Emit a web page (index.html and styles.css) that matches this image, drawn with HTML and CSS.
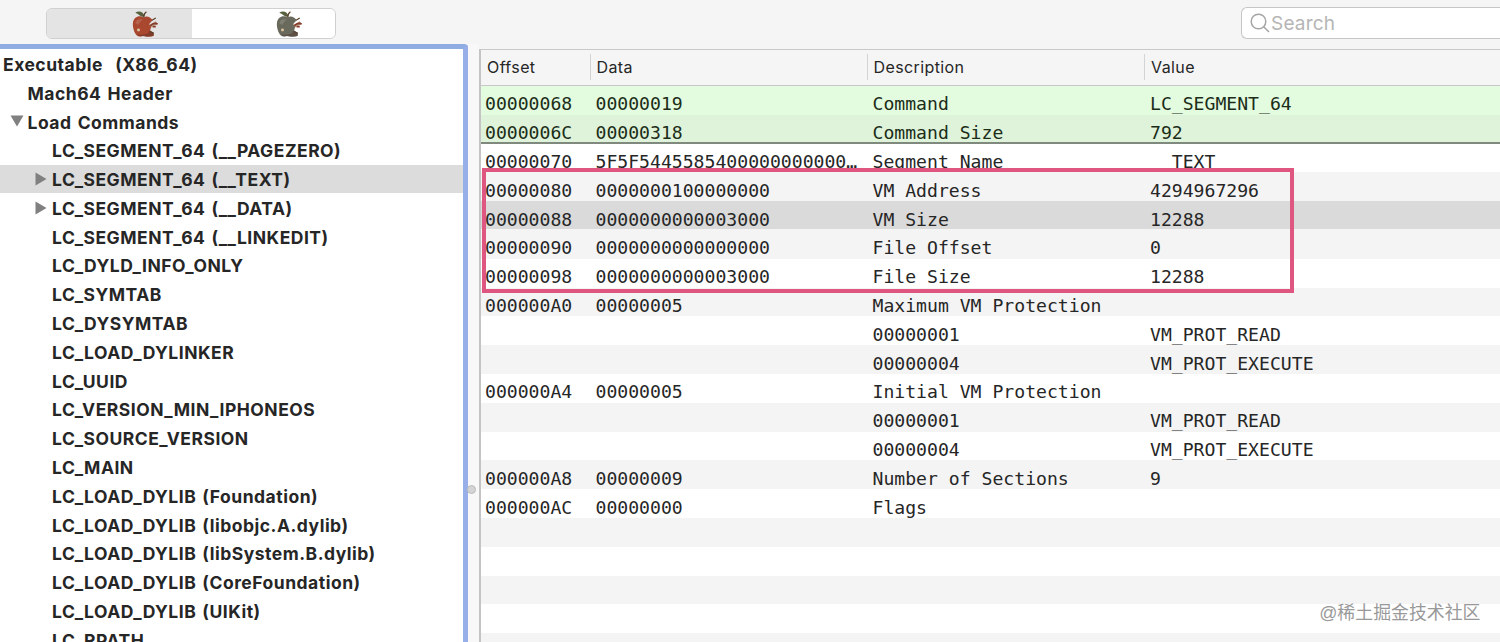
FILE: index.html
```
<!DOCTYPE html>
<html lang="en">

<head>
    <meta charset="UTF-8">
    <meta name="viewport" content="width=device-width, initial-scale=1.0">
    <title>Executable (X86_64)</title>
    <link rel="stylesheet" href="styles.css">
</head>

<body>
    <svg class="defs" width="0" height="0">
        <symbol id="apple" viewBox="0 0 30 30">
            <path fill="currentColor" d="M13 8C8 5 2 8 1.500 14C1 20 4 28 8 28.500C11 29 11 27.500 14 28C17 29 21 29 24 27.500L23.500 24.500L20 22L21 18L19 15L22.500 11C20 7 16 6 13 8Z" />
            <path class="apple-shade" d="M22 28Q24 28 24 26L22 24L19 22L18 25Q13 27.500 6 26Q8 29 14 28Q18 29 22 28Z" />
            <path class="apple-leaf" d="M4 3C8 0 13 2 14 7C9 8 8 4 4 3Z" />
            <path class="apple-line" d="M13 8Q13 4 16 2M22 11L26 8.500M20 23L24 25" />
            <path class="apple-bite" d="M19 16L26 12L28 15L22 19Z" />
            <path class="apple-worm" d="M20 17Q24 13 28 15M23 18L26 18" />
            <circle class="apple-shine" cx="7.500" cy="21.500" r="1.600" />
            <path class="apple-glow" d="M4 14Q5 9 12 10Q9 13 7 16Z" />
        </symbol>
    </svg>

    <header class="toolbar">
        <div class="switch">
            <button type="button" class="active"><svg class="apple red"><use href="#apple" /></svg></button>
            <button type="button"><svg class="apple gray"><use href="#apple" /></svg></button>
        </div>
        <div class="search">
            <svg class="search-icon" viewBox="0 0 20 20"><circle cx="8.500" cy="8.500" r="7.300" /><path d="M13.700 13.700L19 19" /></svg>
            <span>Search</span>
        </div>
    </header>

    <main class="content">
        <nav class="sidebar">
            <div class="item root"><span>Executable&nbsp; (X86_64)</span></div>
            <div class="item level1"><span>Mach64 Header</span></div>
            <div class="item level1"><svg class="arrow" viewBox="0 0 14 14"><path d="M0.500 1.500H13.500L7 12.500Z" /></svg><span>Load Commands</span></div>
            <div class="item"><span>LC_SEGMENT_64 (__PAGEZERO)</span></div>
            <div class="item selected"><svg class="arrow" viewBox="0 0 14 14"><path d="M1.500 0.500L12.500 7L1.500 13.500Z" /></svg><span>LC_SEGMENT_64 (__TEXT)</span></div>
            <div class="item"><svg class="arrow" viewBox="0 0 14 14"><path d="M1.500 0.500L12.500 7L1.500 13.500Z" /></svg><span>LC_SEGMENT_64 (__DATA)</span></div>
            <div class="item"><span>LC_SEGMENT_64 (__LINKEDIT)</span></div>
            <div class="item"><span>LC_DYLD_INFO_ONLY</span></div>
            <div class="item"><span>LC_SYMTAB</span></div>
            <div class="item"><span>LC_DYSYMTAB</span></div>
            <div class="item"><span>LC_LOAD_DYLINKER</span></div>
            <div class="item"><span>LC_UUID</span></div>
            <div class="item"><span>LC_VERSION_MIN_IPHONEOS</span></div>
            <div class="item"><span>LC_SOURCE_VERSION</span></div>
            <div class="item"><span>LC_MAIN</span></div>
            <div class="item"><span>LC_LOAD_DYLIB (Foundation)</span></div>
            <div class="item"><span>LC_LOAD_DYLIB (libobjc.A.dylib)</span></div>
            <div class="item"><span>LC_LOAD_DYLIB (libSystem.B.dylib)</span></div>
            <div class="item"><span>LC_LOAD_DYLIB (CoreFoundation)</span></div>
            <div class="item"><span>LC_LOAD_DYLIB (UIKit)</span></div>
            <div class="item"><span>LC_RPATH</span></div>
        </nav>

        <div class="splitter"><i class="knob"></i></div>

        <section class="table">
            <div class="head">
                <span>Offset</span><span>Data</span><span>Description</span><span>Value</span>
            </div>
            <div class="rows">
                <div class="row green"><span>00000068</span><span>00000019</span><span>Command</span><span>LC_SEGMENT_64</span></div>
                <div class="row green last"><span>0000006C</span><span>00000318</span><span>Command Size</span><span>792</span></div>
                <div class="row"><span>00000070</span><span>5F5F5445585400000000000000000000</span><span>Segment Name</span><span>__TEXT</span></div>
                <div class="row"><span>00000080</span><span>0000000100000000</span><span>VM Address</span><span>4294967296</span></div>
                <div class="row current"><span>00000088</span><span>0000000000003000</span><span>VM Size</span><span>12288</span></div>
                <div class="row"><span>00000090</span><span>0000000000000000</span><span>File Offset</span><span>0</span></div>
                <div class="row"><span>00000098</span><span>0000000000003000</span><span>File Size</span><span>12288</span></div>
                <div class="row"><span>000000A0</span><span>00000005</span><span>Maximum VM Protection</span><span></span></div>
                <div class="row"><span></span><span></span><span>00000001</span><span>VM_PROT_READ</span></div>
                <div class="row"><span></span><span></span><span>00000004</span><span>VM_PROT_EXECUTE</span></div>
                <div class="row"><span>000000A4</span><span>00000005</span><span>Initial VM Protection</span><span></span></div>
                <div class="row"><span></span><span></span><span>00000001</span><span>VM_PROT_READ</span></div>
                <div class="row"><span></span><span></span><span>00000004</span><span>VM_PROT_EXECUTE</span></div>
                <div class="row"><span>000000A8</span><span>00000009</span><span>Number of Sections</span><span>9</span></div>
                <div class="row"><span>000000AC</span><span>00000000</span><span>Flags</span><span></span></div>
                <div class="row"></div>
                <div class="row"></div>
                <div class="row"></div>
                <div class="row"></div>
                <div class="row"></div>
            </div>
            <div class="highlight"></div>
            <div class="watermark">@稀土掘金技术社区</div>
        </section>
    </main>
</body>

</html>
```
FILE: styles.css
```
* {
    box-sizing: border-box;
}

body {
    margin: 0;
    height: 642px;
    overflow: hidden;
    display: flex;
    flex-direction: column;
    background: #f5f5f5;
    color: #262626;
    font-family: Inter, sans-serif;
}

.defs {
    display: none;
}

/* toolbar */
.toolbar {
    flex: none;
    height: 44px;
    display: flex;
    justify-content: space-between;
    align-items: flex-start;
    padding: 8px 0 0 46px;
}

.switch {
    display: flex;
    width: 290px;
    height: 31px;
    border: 1px solid #d0d0d0;
    border-radius: 6px;
    overflow: hidden;
}

.switch button {
    flex: 1;
    padding: 0 0 0 51px;
    border: none;
    background: #fff;
    display: flex;
    align-items: center;
    justify-content: center;
}

.switch .active {
    flex: 0 0 145px;
    background: #e4e4e4;
}

.apple {
    width: 29px;
    height: 28px;
}

.red {
    color: #a9472f;
}

.gray {
    color: #69695c;
}

.apple-shade {
    fill: #4b2a20;
    opacity: 0.4;
}

.apple-leaf {
    fill: #57613d;
}

.apple-line {
    fill: none;
    stroke: #59402c;
    stroke-width: 1.3;
}

.apple-bite {
    fill: #b59075;
}

.apple-worm {
    fill: none;
    stroke: #873b30;
    stroke-width: 1.6;
}

.apple-shine {
    fill: #d9c3a0;
}

.apple-glow {
    fill: #fff;
    opacity: 0.15;
}

.search {
    display: flex;
    align-items: center;
    width: 259px;
    height: 32px;
    margin-top: -1px;
    padding-left: 8px;
    border: 1px solid #c6c6c6;
    border-right: none;
    border-radius: 6px 0 0 6px;
    background: #fff;
    color: #b5b5b5;
    font-size: 19px;
    letter-spacing: 0.2px;
}

.search-icon {
    width: 20px;
    height: 20px;
    margin-right: 1px;
    fill: none;
    stroke: #a5a5a5;
    stroke-width: 1.5;
}

/* load command tree */
.content {
    flex: 1;
    min-height: 0;
    display: flex;
}

.sidebar {
    flex: none;
    width: 467.5px;
    padding-top: 1px;
    border-top: 5px solid #8face3;
    border-right: 5px solid #98aee8;
    border-top-right-radius: 4px;
    background: #fff;
    overflow: hidden;
}

.item {
    display: flex;
    align-items: center;
    height: 28.8px;
    padding: 1px 0 0 34px;
    font-size: 17.5px;
    font-weight: 700;
    line-height: 28px;
    letter-spacing: 0.5px;
    word-spacing: 1.5px;
    white-space: nowrap;
}

.item::before {
    content: "";
    width: 18px;
}

.item:has(.arrow)::before {
    display: none;
}

.root {
    padding-left: 3px;
}

.root::before {
    display: none;
}

.level1 {
    padding-left: 9.5px;
}

.selected {
    background: linear-gradient(#dcdcdc 27.5px, #fff 27.5px);
}

.arrow {
    width: 14px;
    height: 14px;
    margin: 0 4px 2px 0;
    fill: #808080;
}

.splitter {
    flex: none;
    width: 11.5px;
    position: relative;
    background: #f8f8f8;
}

.knob {
    position: absolute;
    top: 441px;
    left: -1px;
    width: 9px;
    height: 9px;
    border: 1px solid #bbb;
    border-radius: 50%;
    background: #d4d4d4;
}

/* details table */
.table {
    flex: 1;
    min-width: 0;
    position: relative;
    margin-top: 5px;
    border-top: 1px solid #c8c8c8;
    border-left: 2px solid #c4c4c4;
}

.head,
.row {
    display: grid;
    grid-template-columns: 109.5px 277px 277.5px 1fr;
}

.head {
    height: 36px;
    padding: 4px 0 5px;
    border-bottom: 1px solid #c8c8c8;
    font-size: 16px;
    line-height: 26px;
    letter-spacing: 0.4px;
}

.head span {
    padding-left: 6px;
    border-right: 1px solid #d4d4d4;
}

.head span:last-child {
    border-right: none;
}

.rows {
    height: 556px;
    overflow: hidden;
    font-family: "DejaVu Sans Mono", monospace;
    font-size: 18.13px;
}

.row {
    height: 28.8px;
    padding-top: 4.4px;
    line-height: 28px;
    overflow: hidden;
    background: #fff;
}

.row:nth-child(even) {
    background: #f4f4f4;
}

.row span {
    padding: 0 7px 0 5px;
    height: 28px;
    white-space: nowrap;
    overflow: hidden;
    text-overflow: ellipsis;
}

.row span:first-child {
    padding-left: 4px;
}

.row.green {
    background: #e3fbdf;
    color: #1b2d18;
}

.row.green.last {
    background: linear-gradient(#dff3da 27.2px, #7f897d 27.2px);
}

.row.current {
    background: linear-gradient(#dadada 27.8px, #f4f4f4 27.8px);
}

/* marks the VM Address - File Size rows */
.highlight {
    position: absolute;
    top: 118px;
    left: 1px;
    width: 812px;
    height: 125px;
    border: 4px solid #df5680;
}

.watermark {
    position: absolute;
    right: 19.5px;
    bottom: 16px;
    color: #999;
    font: 17.9px/26px "Liberation Sans", "Noto Sans CJK SC", sans-serif;
}
```
